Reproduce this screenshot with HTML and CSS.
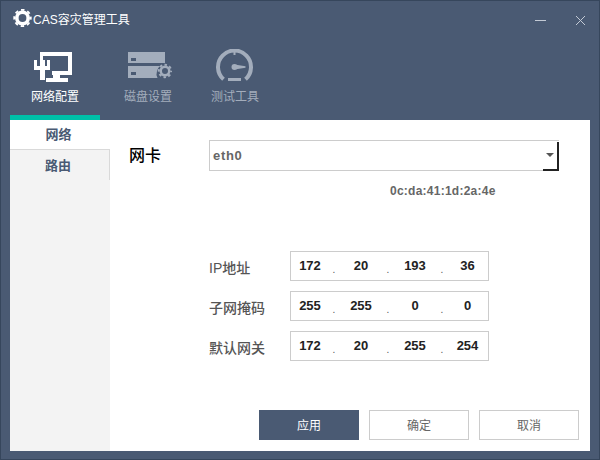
FILE: index.html
```html
<!DOCTYPE html>
<html lang="zh">
<head>
<meta charset="utf-8">
<title>CAS容灾管理工具</title>
<link rel="stylesheet" href="styles.css">
</head>
<body>
<div class="window">
  <header class="titlebar">
    <svg class="logo" viewBox="0 0 19 18" width="19" height="18">
      <circle cx="9.5" cy="9" r="5.700" fill="none" stroke="#fff" stroke-width="3.600"/>
      <circle cx="9.500" cy="9" r="8.200" fill="none" stroke="#fff" stroke-width="2" stroke-dasharray="3.400 3.040" stroke-dashoffset="1.700"/>
    </svg>
    <span class="title">CAS容灾管理工具</span>
    <div class="winbtns">
      <span class="minimize"></span>
      <svg class="close" viewBox="0 0 9 9" width="9" height="9"><path d="M0 0l9 9M9 0l-9 9" stroke="#c3cad5" stroke-width="1" fill="none"/></svg>
    </div>
  </header>
  <nav class="tabs">
    <div class="tab active tab-net">
      <svg class="tabicon" viewBox="0 0 48 36" width="48" height="36">
        <g transform="translate(3 3)" fill="#fff">
          <path d="M6 0h32v23H18v-4h16V4H9v5H6z"/>
          <path d="M0 8h3v6h3V8h5v6h2V8h3v10h-5v10H6V18H0z"/>
          <path d="M12 26h22v4H12zM19 23h7v3h-7z"/>
        </g>
      </svg>
      <span>网络配置</span>
    </div>
    <div class="tab tab-disk">
      <svg class="tabicon" viewBox="0 0 48 36" width="48" height="36">
        <g transform="translate(4 3)" fill="#a3adbc">
          <path fill-rule="evenodd" d="M0 0h37v11H0zM3 6v3h5V6zM0 14h32a9 9 0 0 0-3 5 9 9 0 0 0 .5 7H0zM3 20v3h5v-3z"/>
          <circle cx="37" cy="19" r="4.250" fill="none" stroke="#a3adbc" stroke-width="2.500"/>
          <circle cx="37" cy="19" r="6.200" fill="none" stroke="#a3adbc" stroke-width="2" stroke-dasharray="2.500 2.370" stroke-dashoffset="1.250"/>
        </g>
      </svg>
      <span>磁盘设置</span>
    </div>
    <div class="tab tab-test">
      <svg class="tabicon" viewBox="0 0 48 36" width="48" height="36">
        <g transform="translate(5 0)" fill="#a3adbc">
          <path fill="none" stroke="#a3adbc" stroke-width="4" d="M7.500 30.300A16.500 16.500 0 1 1 29.500 30.300"/>
          <path d="M17.500 2h2v4h-2zM12 29h13v3H12z"/>
          <circle cx="18.500" cy="18" r="3"/>
          <path d="M20 15.800l9.500 1.400v1.600L20 20.200z"/>
        </g>
      </svg>
      <span>测试工具</span>
    </div>
  </nav>
  <div class="content">
    <aside class="sidebar">
      <div class="side-item current">网络</div>
      <div class="side-item">路由</div>
      <div class="side-rest"></div>
    </aside>
    <main class="main">
      <div class="nic-row">
        <span class="nic-label">网卡</span>
        <div class="combo">
          <span class="combo-value">eth0</span>
          <span class="combo-arrow"></span>
        </div>
      </div>
      <div class="mac">0c:da:41:1d:2a:4e</div>
      <div class="ip-rows">
        <div class="ip-row">
          <span class="ip-label">IP地址</span>
          <div class="ip-box"><b>172</b><i>.</i><b>20</b><i>.</i><b>193</b><i>.</i><b>36</b></div>
        </div>
        <div class="ip-row">
          <span class="ip-label">子网掩码</span>
          <div class="ip-box"><b>255</b><i>.</i><b>255</b><i>.</i><b>0</b><i>.</i><b>0</b></div>
        </div>
        <div class="ip-row">
          <span class="ip-label">默认网关</span>
          <div class="ip-box"><b>172</b><i>.</i><b>20</b><i>.</i><b>255</b><i>.</i><b>254</b></div>
        </div>
      </div>
      <div class="actions">
        <button class="btn primary">应用</button>
        <button class="btn">确定</button>
        <button class="btn">取消</button>
      </div>
    </main>
  </div>
</div>
</body>
</html>
```
FILE: styles.css
```css
* { box-sizing: border-box; }
html, body { margin: 0; padding: 0; }
body {
  width: 600px;
  height: 460px;
  overflow: hidden;
  font-family: "Liberation Sans", "Noto Sans CJK SC", sans-serif;
}
.window {
  width: 600px;
  height: 460px;
  background: #4a5a73;
  border: 1px solid #36465c;
  padding: 0 9px 8px;
  display: flex;
  flex-direction: column;
}
.titlebar {
  height: 34px;
  flex: none;
  display: flex;
  align-items: center;
  padding: 0 0 0 3px;
  color: #fff;
  font-size: 12px;
}
.logo { flex: none; }
.title { margin-left: 1px; }
.winbtns {
  margin-left: auto;
  display: flex;
  align-items: center;
  gap: 30px;
  padding-right: 5px;
  margin-top: 5px;
}
.minimize { display: block; width: 11px; height: 1px; background: #c3cad5; }
.close { display: block; }
.tabs {
  height: 85px;
  flex: none;
  display: flex;
}
.tab {
  height: 85px;
  padding-top: 14px;
  display: flex;
  flex-direction: column;
  align-items: center;
  font-size: 12px;
  color: #a3adbc;
  border-bottom: 5px solid transparent;
}
.tab-net { width: 90px; }
.tab-disk { width: 96px; }
.tab-test { width: 78px; }
.tab.active { color: #fff; border-bottom-color: #00bfa8; }
.tabicon { display: block; flex: none; }
.tab span { margin-top: 3px; line-height: 18px; }
.content {
  flex: 1;
  min-height: 0;
  background: #fff;
  display: flex;
}
.sidebar {
  width: 100px;
  flex: none;
  background: #f3f3f3;
  display: flex;
  flex-direction: column;
}
.side-item {
  height: 30px;
  display: flex;
  align-items: center;
  justify-content: center;
  font-size: 13px;
  font-weight: 700;
  color: #4a5a73;
  border-right: 1px solid #d9d9d9;
  padding: 0 3px 2px 0;
}
.side-item.current {
  background: #fff;
  border-right: 0;
  border-bottom: 1px solid #d9d9d9;
}
.side-rest { flex: 1; }
.main {
  flex: 1;
  display: flex;
  flex-direction: column;
  padding: 20px 11px 11px 20px;
}
.nic-row { display: flex; align-items: center; height: 31px; }
.nic-label {
  width: 80px;
  margin-left: -1px;
  padding-bottom: 4px;
  font-size: 16px;
  color: #000;
  font-weight: 500;
}
.combo {
  width: 350px;
  height: 31px;
  border: 1px solid #cccccc;
  border-right: 0;
  border-bottom: 0;
  display: flex;
  align-items: center;
  justify-content: space-between;
  box-shadow: inset 0 -1px 0 #cccccc;
}
.combo-value {
  margin-left: 3px;
  padding-bottom: 2px;
  font-weight: 700;
  font-size: 13px;
  letter-spacing: 0.7px;
  color: #666;
}
.combo-arrow {
  width: 16px;
  height: 29px;
  margin-top: 1px;
  border-right: 2px solid #222;
  border-bottom: 2px solid #222;
  position: relative;
}
.combo-arrow::after {
  content: "";
  position: absolute;
  left: 3px;
  top: 11px;
  border-left: 4px solid transparent;
  border-right: 4px solid transparent;
  border-top: 4px solid #555;
}
.mac {
  margin: 12px 0 0 260px;
  height: 16px;
  line-height: 16px;
  font-size: 12px;
  font-weight: 700;
  letter-spacing: 0.25px;
  color: #666;
}
.ip-rows {
  margin-top: 52px;
  display: flex;
  flex-direction: column;
  gap: 10px;
}
.ip-row { display: flex; align-items: center; padding-left: 79px; height: 30px; }
.ip-label {
  width: 81px;
  font-size: 14px;
  font-weight: 500;
  color: #555;
  padding-top: 1px;
}
.ip-box {
  width: 199px;
  height: 30px;
  border: 1px solid #cccccc;
  display: grid;
  grid-template-columns: 38px 10px 44px 10px 44px 10px 41px;
  align-items: center;
  font-size: 13px;
}
.ip-box b { text-align: center; color: #222; padding-bottom: 1px; font-weight: 700; }
.ip-box i { font-style: normal; text-align: center; color: #555; font-size: 10px; padding-top: 6px; }
.actions {
  margin-top: auto;
  display: flex;
  justify-content: flex-end;
  gap: 10px;
}
.btn {
  width: 100px;
  height: 30px;
  background: #fff;
  border: 1px solid #cccccc;
  color: #666;
  font-family: inherit;
  font-size: 12px;
  padding: 0 0 2px;
}
.btn.primary { background: #4a5a73; border-color: #4a5a73; color: #fff; }
```
